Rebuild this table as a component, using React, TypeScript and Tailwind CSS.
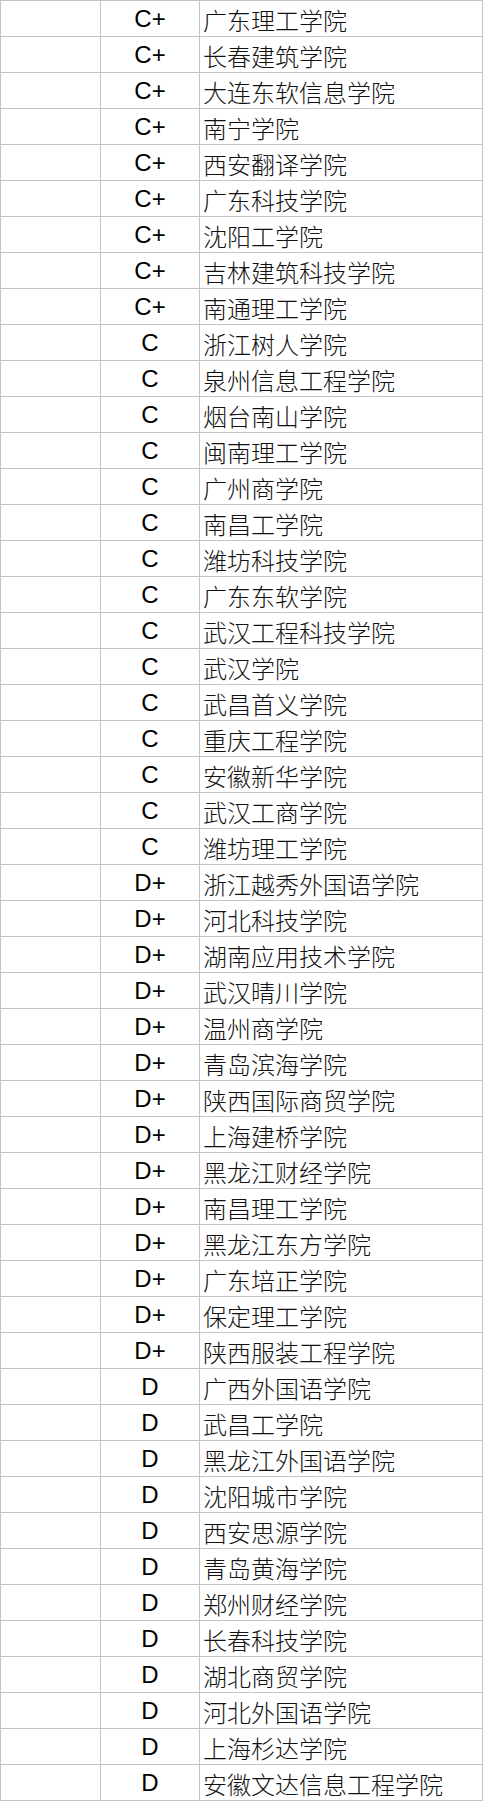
const rows: [string, string][] = [
  ["C+", "广东理工学院"],
  ["C+", "长春建筑学院"],
  ["C+", "大连东软信息学院"],
  ["C+", "南宁学院"],
  ["C+", "西安翻译学院"],
  ["C+", "广东科技学院"],
  ["C+", "沈阳工学院"],
  ["C+", "吉林建筑科技学院"],
  ["C+", "南通理工学院"],
  ["C", "浙江树人学院"],
  ["C", "泉州信息工程学院"],
  ["C", "烟台南山学院"],
  ["C", "闽南理工学院"],
  ["C", "广州商学院"],
  ["C", "南昌工学院"],
  ["C", "潍坊科技学院"],
  ["C", "广东东软学院"],
  ["C", "武汉工程科技学院"],
  ["C", "武汉学院"],
  ["C", "武昌首义学院"],
  ["C", "重庆工程学院"],
  ["C", "安徽新华学院"],
  ["C", "武汉工商学院"],
  ["C", "潍坊理工学院"],
  ["D+", "浙江越秀外国语学院"],
  ["D+", "河北科技学院"],
  ["D+", "湖南应用技术学院"],
  ["D+", "武汉晴川学院"],
  ["D+", "温州商学院"],
  ["D+", "青岛滨海学院"],
  ["D+", "陕西国际商贸学院"],
  ["D+", "上海建桥学院"],
  ["D+", "黑龙江财经学院"],
  ["D+", "南昌理工学院"],
  ["D+", "黑龙江东方学院"],
  ["D+", "广东培正学院"],
  ["D+", "保定理工学院"],
  ["D+", "陕西服装工程学院"],
  ["D", "广西外国语学院"],
  ["D", "武昌工学院"],
  ["D", "黑龙江外国语学院"],
  ["D", "沈阳城市学院"],
  ["D", "西安思源学院"],
  ["D", "青岛黄海学院"],
  ["D", "郑州财经学院"],
  ["D", "长春科技学院"],
  ["D", "湖北商贸学院"],
  ["D", "河北外国语学院"],
  ["D", "上海杉达学院"],
  ["D", "安徽文达信息工程学院"],
]

export default function App() {
  return (
    <div className="w-[483px] bg-white">
      <div className="grid grid-cols-[99px_98px_282px] gap-px bg-[#c4c4c4] p-px">
        {rows.map(([grade, name], i) => (
          <div key={i} className="contents">
            <div className="h-[35px] bg-white" />
            <div className="flex h-[35px] items-center justify-center bg-white font-['Liberation_Sans',Arial,sans-serif] text-[24px] leading-none text-black">
              {grade}
            </div>
            <div className="flex h-[35px] items-center bg-white pl-[3px] pt-[3px] font-['Noto_Sans_CJK_SC',sans-serif] text-[24px] font-light leading-none text-[#111]">
              {name}
            </div>
          </div>
        ))}
      </div>
    </div>
  )
}
